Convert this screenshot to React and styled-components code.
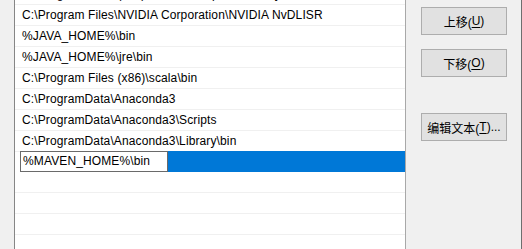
import React from "react";
import styled, { createGlobalStyle } from "styled-components";

const GlobalStyle = createGlobalStyle`
  html, body {
    margin: 0;
    padding: 0;
    background: #f0f0f0;
  }
  body {
    font-family: "Liberation Sans", "Noto Sans CJK SC", sans-serif;
    font-size: 12px;
    color: #000;
  }
`;

const paths = [
  "C:\\Program Files (x86)\\NVIDIA Corporation\\PhysX\\Common",
  "C:\\Program Files\\NVIDIA Corporation\\NVIDIA NvDLISR",
  "%JAVA_HOME%\\bin",
  "%JAVA_HOME%\\jre\\bin",
  "C:\\Program Files (x86)\\scala\\bin",
  "C:\\ProgramData\\Anaconda3",
  "C:\\ProgramData\\Anaconda3\\Scripts",
  "C:\\ProgramData\\Anaconda3\\Library\\bin",
];

export default function App() {
  return (
    <>
      <GlobalStyle />
      <Dialog>
        <ListBox>
          <List>
            {paths.map((p) => (
              <Row key={p}>{p}</Row>
            ))}
            <SelectedRow>
              <EditBox>%MAVEN_HOME%\bin</EditBox>
              <Highlight />
            </SelectedRow>
            <Row />
            <Row />
            <Row />
            <Row />
          </List>
        </ListBox>
        <ButtonColumn>
          <Button $top={0}>
            上移(<u>U</u>)
          </Button>
          <Button $top={14}>
            下移(<u>O</u>)
          </Button>
          <Button $top={36}>
            编辑文本(<u>T</u>)...
          </Button>
        </ButtonColumn>
      </Dialog>
    </>
  );
}

const Dialog = styled.div`
  display: flex;
  width: 522px;
  height: 249px;
  overflow: hidden;
  background: #f0f0f0;
  padding-left: 14px;
  box-sizing: border-box;
`;

const ListBox = styled.div`
  width: 392px;
  flex: none;
  height: 100%;
  overflow: hidden;
  background: #fff;
  border-left: 1px solid #868686;
  border-right: 1px solid #a8a8a8;
  box-sizing: border-box;
`;

const List = styled.div`
  margin-top: -16px;
  display: flex;
  flex-direction: column;
`;

const Row = styled.div`
  height: 20px;
  line-height: 20px;
  padding-left: 7px;
  letter-spacing: 0.12px;
  border-bottom: 1px solid #f0f0f0;
  white-space: nowrap;
  overflow: hidden;
`;

const SelectedRow = styled.div`
  display: flex;
  height: 21px;
  margin-top: -1px;
`;

const EditBox = styled.div`
  margin-left: 5px;
  width: 148px;
  height: 21px;
  line-height: 19px;
  padding-left: 2px;
  letter-spacing: 0.12px;
  border: 1px solid #6a6a6a;
  box-sizing: border-box;
  background: #fff;
  white-space: nowrap;
`;

const Highlight = styled.div`
  flex: 1;
  background: #0078d7;
`;

const ButtonColumn = styled.div`
  flex: 1;
  display: flex;
  flex-direction: column;
  align-items: flex-start;
  padding: 7px 0 0 15px;
  border-right: 1px solid #6e6e6e;
  box-sizing: border-box;
  height: 100%;
`;

const Button = styled.div`
  width: 86px;
  height: 28px;
  margin-top: ${(p) => p.$top}px;
  display: flex;
  align-items: center;
  justify-content: center;
  background: #e1e1e1;
  border: 1px solid #adadad;
  box-sizing: border-box;
  font-size: 12px;
  color: #000;

  u {
    text-decoration: underline;
    text-underline-offset: 2px;
  }
`;
